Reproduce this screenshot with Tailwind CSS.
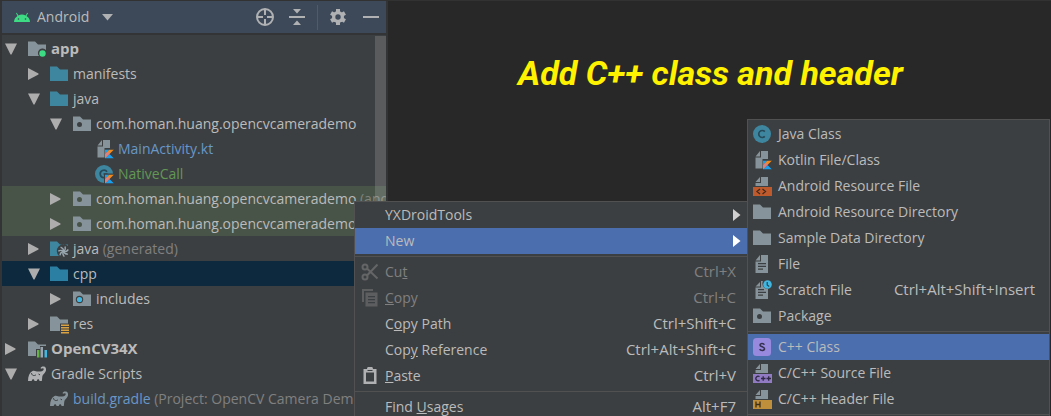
<!DOCTYPE html>
<html lang="en">
<head>
    <meta charset="UTF-8">
    <meta name="viewport" content="width=device-width, initial-scale=1.0">
    <title>Add C++ class and header</title>
    <script src="https://cdn.jsdelivr.net/npm/@tailwindcss/browser@4"></script>
</head>
<body class="bg-[#282828] font-['Open_Sans','Noto_Sans',sans-serif] text-sm text-[#bbbbbb]">
    <!-- Icon sprite -->
    <svg class="hidden">
        <symbol id="down" viewBox="0 0 12 12"><path fill="#adadad" d="M0 .5h12L6.500 11.500h-1z"/></symbol>
        <symbol id="right" viewBox="0 0 12 12"><path fill="#adadad" d="M0 0l10.500 5.500v1L0 12z"/></symbol>
        <symbol id="folder" viewBox="0 0 18 18"><path fill="currentColor" d="M0 1.500h7l3 3h8V16H0z"/></symbol>
        <symbol id="module" viewBox="0 0 18 18">
            <path fill="#87939a" d="M0 1.500h7l3 3h8v5.500a4.500 4.500 0 0 0-7 6H0z"/>
            <circle cx="14.500" cy="13.500" r="3.200" fill="#3ddc84"/>
        </symbol>
        <symbol id="package" viewBox="0 0 18 18">
            <path fill="#87939a" fill-rule="evenodd" d="M0 1.500h7l3 3h8V16H0zM6.500 7a2.500 2.500 0 1 0 0 5 2.500 2.500 0 0 0 0-5z"/>
        </symbol>
        <symbol id="includes" viewBox="0 0 18 18">
            <path fill="#87939a" d="M0 1.500h7l3 3h8V16H0z"/>
            <circle cx="6.500" cy="9.500" r="3.700" fill="#3c3f41"/>
            <circle cx="6.500" cy="9.500" r="2.600" fill="#40b6e0"/>
        </symbol>
        <symbol id="generated" viewBox="0 0 18 18" overflow="visible">
            <path fill="#3e86a0" d="M0 1.500h7l3 3h8v1.500a6 6 0 0 0-9 10H0z"/>
            <g fill="none" stroke="#9aa7b0" stroke-width="1.400">
                <path id="blade" d="M13.500 11.500q2.500-1.500 1.500-5"/>
                <use href="#blade" transform="rotate(51 13.500 11.500)"/>
                <use href="#blade" transform="rotate(103 13.500 11.500)"/>
                <use href="#blade" transform="rotate(154 13.500 11.500)"/>
                <use href="#blade" transform="rotate(206 13.500 11.500)"/>
                <use href="#blade" transform="rotate(257 13.500 11.500)"/>
                <use href="#blade" transform="rotate(309 13.500 11.500)"/>
            </g>
        </symbol>
        <symbol id="resources" viewBox="0 0 18 18" overflow="visible">
            <path fill="#87939a" d="M0 1.500h7l3 3h8v4h-8V16H0z"/>
            <path fill="#d9a343" d="M11 9.500h8V11h-8zM11 12h8v1.500h-8zM11 14.500h8V16h-8zM11 17h8v1.500h-8z"/>
        </symbol>
        <symbol id="library" viewBox="0 0 18 18" overflow="visible">
            <path fill="#87939a" d="M0 1.500h7l3 3h8v1.500h-6v3H8V16H0z"/>
            <path fill="#62b543" d="M9 10h2.500v7.500H9z"/>
            <path fill="#9aa7b0" d="M12.500 7H15v10.500h-2.500z"/>
            <path fill="#40b6e0" d="M16.500 10H19v7.500h-2.500z"/>
        </symbol>
        <symbol id="kotlin" viewBox="0 0 10 10">
            <path fill="#18a0f0" d="M0 0h5L0 5zM0 10l5-5 5 5z"/>
            <path fill="#f48a1d" d="M5 0h5L0 10V5z"/>
            <path fill="#c778ce" d="M0 5l3-3 2 3-5 5z" opacity=".55"/>
        </symbol>
        <symbol id="kotlin-file" viewBox="0 0 18 18" overflow="visible">
            <path fill="#87939a" d="M2.500 5.500L7 0v5.500zM8 0h7v8H9.500v9.500h-7v-11H8z"/>
            <use href="#kotlin" x="10" y="9.500" width="9" height="9"/>
        </symbol>
        <symbol id="kotlin-class" viewBox="0 0 18 18" overflow="visible">
            <circle cx="9" cy="9" r="9" fill="#3e86a0"/>
            <path fill="none" stroke="#264a59" stroke-width="1.700" d="M12 6.800a3.700 3.700 0 1 0-2.500 5.700M8.500 9h4"/>
            <path fill="#3c3f41" d="M9 8.500h10V19H9z"/>
            <use href="#kotlin" x="10" y="9.500" width="9" height="9"/>
        </symbol>
        <symbol id="java-class" viewBox="0 0 18 18">
            <circle cx="9" cy="9" r="9" fill="#3e86a0"/>
            <path fill="none" stroke="#264a59" stroke-width="1.700" d="M11.800 6.600a3.500 3.500 0 1 0 0 4.800"/>
        </symbol>
        <symbol id="file" viewBox="0 0 18 18">
            <path fill="#87939a" fill-rule="evenodd" d="M2.500 5.500L7 0v5.500zM8 0h7v18H2.500V6.500H8zM5 8v1.300h8V8zM5 10.700V12h8v-1.300zM5 13.400v1.300h5v-1.300z"/>
        </symbol>
        <symbol id="scratch" viewBox="0 0 18 18" overflow="visible">
            <path fill="#87939a" fill-rule="evenodd" d="M2.500 5.500L7 1v4.500zM8 0h2a5.500 5.500 0 0 0 5 8v10H2.500V6.500H8zM5 8v1.300h6V8zM5 10.700V12h8v-1.300zM5 13.400v1.300h5v-1.300z"/>
            <circle cx="14.500" cy="3.500" r="4.300" fill="#40b6e0"/>
            <path fill="none" stroke="#264a59" stroke-width="1.200" d="M14.200 1v3l2 1.500"/>
        </symbol>
        <symbol id="resource-file" viewBox="0 0 18 18" overflow="visible">
            <path fill="#87939a" d="M2.500 5L7 0v5zM8 0h7v9H2.500V6H8z"/>
            <path fill="#be5a2b" d="M0 10h19v9H0z"/>
            <path fill="none" stroke="#43291d" stroke-width="1.300" d="M7 12l-3 2.500L7 17M9.500 12l3 2.500-3 2.500"/>
        </symbol>
        <symbol id="cpp-file" viewBox="0 0 18 18" overflow="visible">
            <path fill="#87939a" d="M2.500 5L7 0v5zM8 0h7v9H2.500V6H8z"/>
            <path fill="#917bc2" d="M0 10h19v9H0z"/>
            <path fill="none" stroke="#2f2945" stroke-width="1.300" d="M6.500 12.600a2.300 2.300 0 1 0 0 3.800M8 14.500h4.500M10.200 12.200v4.600M13.500 14.500H18M15.700 12.200v4.600"/>
        </symbol>
        <symbol id="header-file" viewBox="0 0 18 18" overflow="visible">
            <path fill="#87939a" d="M2.500 5L7 0v5zM8 0h7v9H2.500V6H8z"/>
            <path fill="#c08f3c" d="M0 10h19v9H0z"/>
            <path fill="none" stroke="#3d301b" stroke-width="1.300" d="M3 11.500v6M7 11.500v6M3 14.500h4"/>
        </symbol>
        <symbol id="cpp-class" viewBox="0 0 18 18">
            <rect width="18" height="18" rx="3.500" fill="#9789dd"/>
            <path fill="none" stroke="#35304f" stroke-width="1.600" d="M11.300 6.700C10.600 5 7 5 7 7c0 2.200 4.500 1.400 4.500 3.800 0 2.200-4 2.100-4.800.3"/>
        </symbol>
        <symbol id="gradle" viewBox="0 0 18 18">
            <path fill="currentColor" d="M0 16C0 11 1.500 7.500 4.500 6c2.300-1 3.700.8 6 .6 2.500-.1 4.800-.4 5.200-2.100.2-1.200-1.200-1.500-1.700-.8l-1.500-.4c.4-1.500 2-2.100 3.500-1.700 2 .5 2.500 2.700 1.700 4.700-.9 2.200-3 3.100-3.400 5.200-.2 1.600-.2 3-.5 4.500h-2.300c-.2-2.200-2.400-2.200-2.700 0H6.500c-.2-2.200-2.500-2.200-2.800 0z"/>
            <path fill="none" stroke="#3c3f41" d="M3.500 8c.2 2.500 2.500 3.300 4.500 1.800M10.500 9l1.500.9"/>
        </symbol>
        <symbol id="cut" viewBox="0 0 18 18">
            <g fill="none" stroke="#636566" stroke-width="2">
                <circle cx="4" cy="4" r="2.500"/><circle cx="4" cy="14" r="2.500"/>
                <path d="M6 5.500L16.500 15.500M6 12.500L16.500 1.500"/>
            </g>
        </symbol>
        <symbol id="copy" viewBox="0 0 18 18">
            <path fill="#5c5e60" fill-rule="evenodd" d="M1 0h11v2H3v11H1zM4.500 3.500h12v14h-12zM7 7v1.200h7V7zM7 10v1.200h7V10zM7 13v1.200h7V13z"/>
        </symbol>
        <symbol id="paste" viewBox="0 0 18 18">
            <path fill="#afb1b3" fill-rule="evenodd" d="M2.500 2H6a3 2.500 0 0 1 6 0h3.500v15h-13zM5 5.500v9h8v-9z"/>
            <path stroke="#3c3f41" d="M6.500 3.500h5"/>
        </symbol>
        <symbol id="submenu" viewBox="0 0 8 12"><path fill="currentColor" d="M0 0l7.500 6L0 12z"/></symbol>
    </svg>

    <main class="relative flex h-screen overflow-hidden border-t border-[#323232]">
        <!-- Project panel -->
        <section class="relative w-[388px] shrink-0 overflow-hidden border-x-2 border-[#323435] bg-[#3c3f41]">
            <header class="flex h-[34px] items-center border-b-2 border-[#323435] bg-[#3d4958] pl-3">
                <svg class="h-[18px] w-[16px]" viewBox="0 0 16 18">
                    <path fill="#3ddc84" d="M0 14a8 7.500 0 0 1 3.500-6L2 5.200l.8-.5 1.600 2.700a9 9 0 0 1 7.200 0l1.600-2.700.8.5L12.500 8a8 7.500 0 0 1 3.500 6z"/>
                    <circle cx="4.500" cy="11" r=".8" fill="#3d4958"/><circle cx="11.500" cy="11" r=".8" fill="#3d4958"/>
                </svg>
                <label class="ml-[7px] flex items-center gap-3">
                    <select class="appearance-none bg-transparent outline-none" aria-label="Project view">
                        <option>Android</option>
                    </select>
                    <svg class="h-[7px] w-[11px]" viewBox="0 0 11 7"><path fill="#afb1b3" d="M0 0h11L5.500 6.500z"/></svg>
                </label>
                <div class="ml-auto flex items-center pr-[7px]">
                    <button class="mr-[15px]" aria-label="Select opened file">
                        <svg class="size-[18px]" viewBox="0 0 18 18" fill="none" stroke="#afb1b3" stroke-width="2">
                            <circle cx="9" cy="9" r="8"/><path d="M9 1v6M9 11v6M1 9h6M11 9h6"/>
                        </svg>
                    </button>
                    <button class="mr-[12px]" aria-label="Collapse all">
                        <svg class="size-[16px]" viewBox="0 0 16 16" fill="#afb1b3"><path d="M0 7h16v2H0zM4 0h8L8 4.500zM4 16h8l-4-4.500z"/></svg>
                    </button>
                    <span class="mr-[12px] h-[25px] w-px bg-[#555a60]"></span>
                    <button class="mr-[17px]" aria-label="Settings">
                        <svg class="size-[16px]" viewBox="0 0 16 16">
                            <g fill="#afb1b3">
                                <circle cx="8" cy="8" r="6"/>
                                <path id="tooth" d="M6 0h4v16H6z"/>
                                <use href="#tooth" transform="rotate(60 8 8)"/>
                                <use href="#tooth" transform="rotate(120 8 8)"/>
                            </g>
                            <circle cx="8" cy="8" r="2.700" fill="#3d4958"/>
                        </svg>
                    </button>
                    <button aria-label="Hide">
                        <svg class="size-[16px]" viewBox="0 0 16 16"><path fill="#afb1b3" d="M0 7h16v2H0z"/></svg>
                    </button>
                </div>
            </header>

            <div role="tree" class="pt-px whitespace-nowrap [&_b]:ml-[5px] [&_p]:ml-[5px] [&_svg]:shrink-0 [&>div]:flex [&>div]:h-[25px] [&>div]:items-center">
                <div role="treeitem" class="pl-[3px]">
                    <svg class="mr-[11px] size-3"><use href="#down"/></svg>
                    <svg class="size-[18px]"><use href="#module"/></svg>
                    <b class="text-[15px]">app</b>
                </div>
                <div role="treeitem" class="pl-[26px]">
                    <svg class="mr-[10px] size-3"><use href="#right"/></svg>
                    <svg class="size-[18px] text-[#3e86a0]"><use href="#folder"/></svg>
                    <p>manifests</p>
                </div>
                <div role="treeitem" class="pl-[26px]">
                    <svg class="mr-[10px] size-3"><use href="#down"/></svg>
                    <svg class="size-[18px] text-[#3e86a0]"><use href="#folder"/></svg>
                    <p>java</p>
                </div>
                <div role="treeitem" class="pl-[48px]">
                    <svg class="mr-[11px] size-3"><use href="#down"/></svg>
                    <svg class="size-[18px]"><use href="#package"/></svg>
                    <p>com.homan.huang.opencvcamerademo</p>
                </div>
                <div role="treeitem" class="pl-[93px]">
                    <svg class="size-[18px] overflow-visible"><use href="#kotlin-file"/></svg>
                    <p class="text-[#6897c8]">MainActivity.kt</p>
                </div>
                <div role="treeitem" class="pl-[93px]">
                    <svg class="size-[18px] overflow-visible"><use href="#kotlin-class"/></svg>
                    <p class="text-[#629755]">NativeCall</p>
                </div>
                <div role="treeitem" class="bg-[#495448] pl-[48px]">
                    <svg class="mr-[11px] size-3"><use href="#right"/></svg>
                    <svg class="size-[18px]"><use href="#package"/></svg>
                    <p>com.homan.huang.opencvcamerademo <span class="text-[#7f837e]">(androidTest)</span></p>
                </div>
                <div role="treeitem" class="bg-[#495448] pl-[48px]">
                    <svg class="mr-[11px] size-3"><use href="#right"/></svg>
                    <svg class="size-[18px]"><use href="#package"/></svg>
                    <p>com.homan.huang.opencvcamerademo</p>
                </div>
                <div role="treeitem" class="pl-[26px]">
                    <svg class="mr-[10px] size-3"><use href="#right"/></svg>
                    <svg class="size-[18px] overflow-visible"><use href="#generated"/></svg>
                    <p>java <span class="text-[#808080]">(generated)</span></p>
                </div>
                <div role="treeitem" aria-selected="true" class="bg-[#0d293e] pl-[26px]">
                    <svg class="mr-[10px] size-3"><use href="#down"/></svg>
                    <svg class="size-[18px] text-[#2b7fa3]"><use href="#folder"/></svg>
                    <p>cpp</p>
                </div>
                <div role="treeitem" class="pl-[48px]">
                    <svg class="mr-[11px] size-3"><use href="#right"/></svg>
                    <svg class="size-[18px]"><use href="#includes"/></svg>
                    <p>includes</p>
                </div>
                <div role="treeitem" class="pl-[26px]">
                    <svg class="mr-[10px] size-3"><use href="#right"/></svg>
                    <svg class="size-[18px] overflow-visible"><use href="#resources"/></svg>
                    <p>res</p>
                </div>
                <div role="treeitem" class="pl-[3px]">
                    <svg class="mr-[11px] size-3"><use href="#right"/></svg>
                    <svg class="size-[18px] overflow-visible"><use href="#library"/></svg>
                    <b class="text-[15px]">OpenCV34X</b>
                </div>
                <div role="treeitem" class="pl-[3px]">
                    <svg class="mr-[11px] size-3"><use href="#down"/></svg>
                    <svg class="size-[18px] text-[#afb1b3]"><use href="#gradle"/></svg>
                    <p>Gradle Scripts</p>
                </div>
                <div role="treeitem" class="pl-[48px]">
                    <svg class="size-[18px] text-[#87939a]"><use href="#gradle"/></svg>
                    <p class="text-[#6897c8]">build.gradle <span class="text-[#808080]">(Project: OpenCV Camera Demo)</span></p>
                </div>
            </div>
            <div class="absolute top-[35px] right-0 bottom-0 w-[11px] bg-white/15"></div>
        </section>

        <h1 class="flex-1 pt-[52px] pl-[130px] font-['Roboto',sans-serif] text-[34px] leading-10 font-bold whitespace-nowrap text-[#fff200] italic">Add C++ class and header</h1>

        <!-- Context menu -->
        <div role="menu" class="absolute top-[200px] left-[354px] w-[394px] border border-[#515151] bg-[#3c3f41] whitespace-nowrap [&_kbd]:ml-auto [&_kbd]:font-[inherit] [&_kbd]:text-[15px] [&_svg]:shrink-0 [&>button]:flex [&>button]:h-[26px] [&>button]:w-full [&>button]:items-center [&>button]:pr-[11px] [&>button]:pl-[30px] [&>hr]:my-[2px] [&>hr]:border-[#515151]">
            <button role="menuitem">YXDroidTools<svg class="-mr-[5px] ml-auto h-3 w-2 text-[#d0d0d0]"><use href="#submenu"/></svg></button>
            <button role="menuitem" class="bg-[#4b6eaf]">New<svg class="-mr-[5px] ml-auto h-3 w-2 text-white"><use href="#submenu"/></svg></button>
            <hr>
            <button role="menuitem" class="text-[#808080]"><svg class="mr-[6px] -ml-6 size-[18px]"><use href="#cut"/></svg><span>Cu<u>t</u></span><kbd>Ctrl+X</kbd></button>
            <button role="menuitem" class="text-[#808080]"><svg class="mr-[6px] -ml-6 size-[18px]"><use href="#copy"/></svg><span><u>C</u>opy</span><kbd>Ctrl+C</kbd></button>
            <button role="menuitem"><span>C<u>o</u>py Path</span><kbd>Ctrl+Shift+C</kbd></button>
            <button role="menuitem"><span>Cop<u>y</u> Reference</span><kbd>Ctrl+Alt+Shift+C</kbd></button>
            <button role="menuitem"><svg class="mr-[6px] -ml-6 size-[18px]"><use href="#paste"/></svg><span><u>P</u>aste</span><kbd>Ctrl+V</kbd></button>
            <hr>
            <button role="menuitem"><span>Find <u>U</u>sages</span><kbd>Alt+F7</kbd></button>
        </div>

        <!-- New submenu -->
        <div role="menu" class="absolute top-[118px] left-[747px] w-[303px] border border-[#515151] bg-[#3c3f41] pt-px whitespace-nowrap [&_svg]:size-[18px] [&_svg]:overflow-visible [&>button]:flex [&>button]:h-[26px] [&>button]:w-full [&>button]:items-center [&>button]:gap-[7px] [&>button]:pr-[14px] [&>button]:pl-[5px] [&>hr]:my-[2px] [&>hr]:border-[#515151]">
            <button role="menuitem"><svg><use href="#java-class"/></svg>Java Class</button>
            <button role="menuitem"><svg><use href="#kotlin-file"/></svg>Kotlin File/Class</button>
            <button role="menuitem"><svg><use href="#resource-file"/></svg>Android Resource File</button>
            <button role="menuitem"><svg class="text-[#87939a]"><use href="#folder"/></svg>Android Resource Directory</button>
            <button role="menuitem"><svg class="text-[#87939a]"><use href="#folder"/></svg>Sample Data Directory</button>
            <button role="menuitem"><svg><use href="#file"/></svg>File</button>
            <button role="menuitem"><svg><use href="#scratch"/></svg>Scratch File<kbd class="ml-auto font-[inherit] text-[15px]">Ctrl+Alt+Shift+Insert</kbd></button>
            <button role="menuitem"><svg><use href="#package"/></svg>Package</button>
            <hr>
            <button role="menuitem" class="bg-[#4b6eaf]"><svg><use href="#cpp-class"/></svg>C++ Class</button>
            <button role="menuitem"><svg><use href="#cpp-file"/></svg>C/C++ Source File</button>
            <button role="menuitem"><svg><use href="#header-file"/></svg>C/C++ Header File</button>
            <hr>
        </div>
    </main>
</body>
</html>
